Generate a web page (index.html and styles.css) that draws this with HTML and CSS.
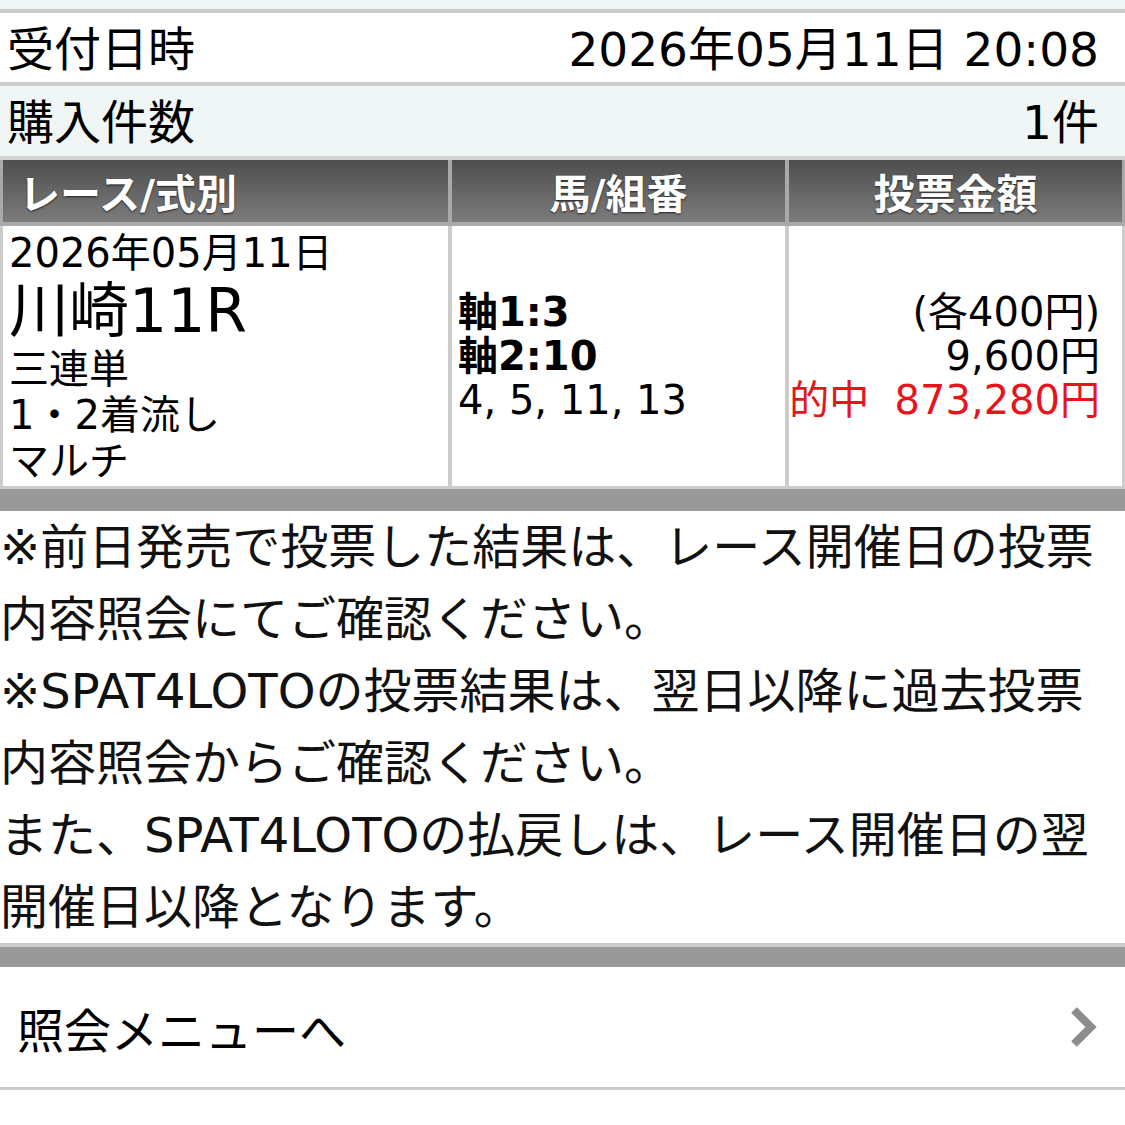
FILE: index.html
```html
<!DOCTYPE html>
<html lang="ja">
	<head>
		<meta charset="UTF-8">
		<meta name="viewport" content="width=device-width, initial-scale=1.0">
		<title>投票内容照会</title>
		<link rel="stylesheet" href="styles.css">
	</head>
	<body>
		<div class="top-strip"></div>

		<!--Summary rows-->
		<div class="info-row">
			<span>受付日時</span>
			<span>2026年05月11日 20:08</span>
		</div>
		<div class="info-row alt">
			<span>購入件数</span>
			<span>1件</span>
		</div>

		<!--Bet table header-->
		<div class="bet-head">
			<div class="head-cell first">レース/式別</div>
			<div class="head-cell">馬/組番</div>
			<div class="head-cell">投票金額</div>
		</div>

		<!--Bet table body-->
		<div class="bet-body">
			<div class="cell race">
				<div>2026年05月11日</div>
				<div class="race-name">川崎11R</div>
				<div>三連単</div>
				<div>1・2着流し</div>
				<div>マルチ</div>
			</div>
			<div class="cell horses">
				<div class="axis">軸1:3</div>
				<div class="axis">軸2:10</div>
				<div>4, 5, 11, 13</div>
			</div>
			<div class="cell amount">
				<div>(各400円)</div>
				<div>9,600円</div>
				<div class="hit">的中&nbsp;&nbsp;873,280円</div>
			</div>
		</div>
		<div class="bar"></div>

		<!--Notes-->
		<div class="notes">
			<p>※前日発売で投票した結果は、レース開催日の投票<br>内容照会にてご確認ください。</p>
			<p>※SPAT4LOTOの投票結果は、翌日以降に過去投票<br>内容照会からご確認ください。</p>
			<p>また、SPAT4LOTOの払戻しは、レース開催日の翌<br>開催日以降となります。</p>
		</div>
		<div class="bar thin"></div>

		<!--Link back to menu-->
		<a class="menu-link" href="#">
			<span>照会メニューへ</span>
			<svg width="30" height="44" viewBox="0 0 30 44">
				<polyline points="5,5 22,22 5,39" fill="none" stroke="#8c8c8c" stroke-width="8" stroke-linejoin="miter"/>
			</svg>
		</a>
	</body>
</html>
```

FILE: styles.css
```css
* {
	box-sizing: border-box;
}

body {
	margin: 0;
	width: 1125px;
	font-family: "DejaVu Sans", "Noto Sans CJK JP", sans-serif;
	color: #000;
	background: #fff;
}

.top-strip {
	height: 13px;
	background: #f0f6f6;
	border-bottom: 4px solid #ccc;
}

/* Summary rows */
.info-row {
	display: flex;
	justify-content: space-between;
	align-items: center;
	height: 73px;
	padding: 3px 26px 0 7px;
	font-size: 47px;
	line-height: 1;
	background: #fff;
	border-bottom: 4px solid #ccc;
}

.info-row.alt {
	height: 74px;
	background: #f0f6f6;
	border-bottom-color: #d4d4d4;
}

/* Bet table */
.bet-head, .bet-body {
	display: grid;
	grid-template-columns: 445px 1fr 1fr;
	gap: 4px;
	padding: 0 3px 4px;
}

.bet-head {
	background: #a9a9a9;
}

.head-cell {
	height: 62px;
	display: flex;
	align-items: center;
	justify-content: center;
	background: linear-gradient(#4e4e4e, #7c7c7c);
	color: #fff;
	font-size: 41px;
	font-weight: bold;
	text-shadow: 0 1px 2px #222;
}

.head-cell.first {
	justify-content: flex-start;
	padding-left: 16px;
}

.bet-body {
	background: #ccc;
	padding-bottom: 3px;
}

.cell {
	background: #fff;
	font-size: 40px;
	line-height: 46px;
}

.race {
	padding: 4px 0 2px 6px;
}

.race .race-name {
	font-size: 60px;
	line-height: 70px;
}

.horses, .amount {
	display: flex;
	flex-direction: column;
	justify-content: center;
	line-height: 44px;
}

.horses {
	padding-left: 6px;
}

.horses .axis {
	font-weight: bold;
}

.amount {
	align-items: flex-end;
	padding-right: 22px;
}

.hit {
	color: #e8141c;
}

.bar {
	height: 22px;
	background: #999;
}

.bar.thin {
	height: 24px;
	border-top: 4px solid #ccc;
}

/* Notes */
.notes {
	font-size: 48px;
	line-height: 72px;
	white-space: nowrap;
	overflow: hidden;
	color: #111;
}

.notes p {
	margin: 0;
}

/* Menu link */
.menu-link {
	display: flex;
	justify-content: space-between;
	align-items: center;
	height: 123px;
	padding: 0 26px 0 17px;
	font-size: 47px;
	color: #000;
	text-decoration: none;
	border-bottom: 3px solid #ccc;
}
```
